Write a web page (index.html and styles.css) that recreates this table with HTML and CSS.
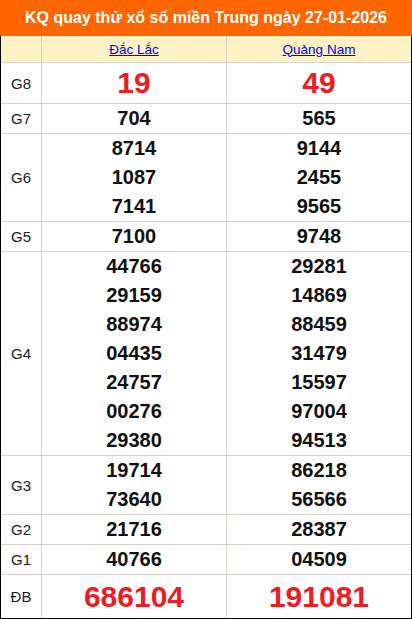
FILE: index.html
```html
<!DOCTYPE html>
<html lang="vi">
<head>
<meta charset="utf-8">
<title>KQ xổ số miền Trung</title>
<link rel="stylesheet" href="styles.css">
</head>
<body>
<div class="title">KQ quay thử xổ số miền Trung ngày 27-01-2026</div>
<div class="board">
  <div class="row head">
    <div class="lbl"></div>
    <div class="cell"><a href="#">Đắc Lắc</a></div>
    <div class="cell"><a href="#">Quảng Nam</a></div>
  </div>
  <div class="row g8">
    <div class="lbl">G8</div>
    <div class="cell big">19</div>
    <div class="cell big">49</div>
  </div>
  <div class="row">
    <div class="lbl">G7</div>
    <div class="cell"><span>704</span></div>
    <div class="cell"><span>565</span></div>
  </div>
  <div class="row">
    <div class="lbl">G6</div>
    <div class="cell"><span>8714</span><span>1087</span><span>7141</span></div>
    <div class="cell"><span>9144</span><span>2455</span><span>9565</span></div>
  </div>
  <div class="row">
    <div class="lbl">G5</div>
    <div class="cell"><span>7100</span></div>
    <div class="cell"><span>9748</span></div>
  </div>
  <div class="row">
    <div class="lbl">G4</div>
    <div class="cell"><span>44766</span><span>29159</span><span>88974</span><span>04435</span><span>24757</span><span>00276</span><span>29380</span></div>
    <div class="cell"><span>29281</span><span>14869</span><span>88459</span><span>31479</span><span>15597</span><span>97004</span><span>94513</span></div>
  </div>
  <div class="row">
    <div class="lbl">G3</div>
    <div class="cell"><span>19714</span><span>73640</span></div>
    <div class="cell"><span>86218</span><span>56566</span></div>
  </div>
  <div class="row">
    <div class="lbl">G2</div>
    <div class="cell"><span>21716</span></div>
    <div class="cell"><span>28387</span></div>
  </div>
  <div class="row">
    <div class="lbl">G1</div>
    <div class="cell"><span>40766</span></div>
    <div class="cell"><span>04509</span></div>
  </div>
  <div class="row db">
    <div class="lbl">ĐB</div>
    <div class="cell big">686104</div>
    <div class="cell big">191081</div>
  </div>
</div>
</body>
</html>
```
FILE: styles.css
```css
html, body {
  margin: 0;
  padding: 0;
  background: #ffffff;
}
body {
  font-family: "Liberation Sans", Arial, sans-serif;
  width: 412px;
}
.title {
  height: 36px;
  line-height: 36px;
  background: #ff6600;
  color: #ffffff;
  font-weight: bold;
  font-size: 16px;
  text-align: center;
  white-space: nowrap;
}
.board {
  border: 1px solid #000000;
  border-top: none;
}
.row {
  display: grid;
  grid-template-columns: 40px 1fr 1fr;
  border-top: 1px solid #d8d2ca;
}
.row.head {
  border-top: none;
  height: 26px;
  background: #fff2c4;
}
.lbl {
  display: flex;
  align-items: center;
  justify-content: center;
  font-size: 15px;
  color: #1a1a1a;
}
.cell {
  border-left: 1px solid #d8d2ca;
  display: flex;
  flex-direction: column;
  align-items: center;
  justify-content: center;
  font-weight: bold;
  font-size: 20px;
  color: #111111;
}
.cell span {
  display: block;
  line-height: 29px;
  height: 29px;
}
.head .cell a {
  font-size: 13.5px;
  font-weight: normal;
  color: #0000ee;
  text-decoration: underline;
}
.row.g8 {
  height: 40px;
}
.row.db {
  height: 43px;
}
.big {
  font-size: 30px;
  color: #ed1c24;
}
```
